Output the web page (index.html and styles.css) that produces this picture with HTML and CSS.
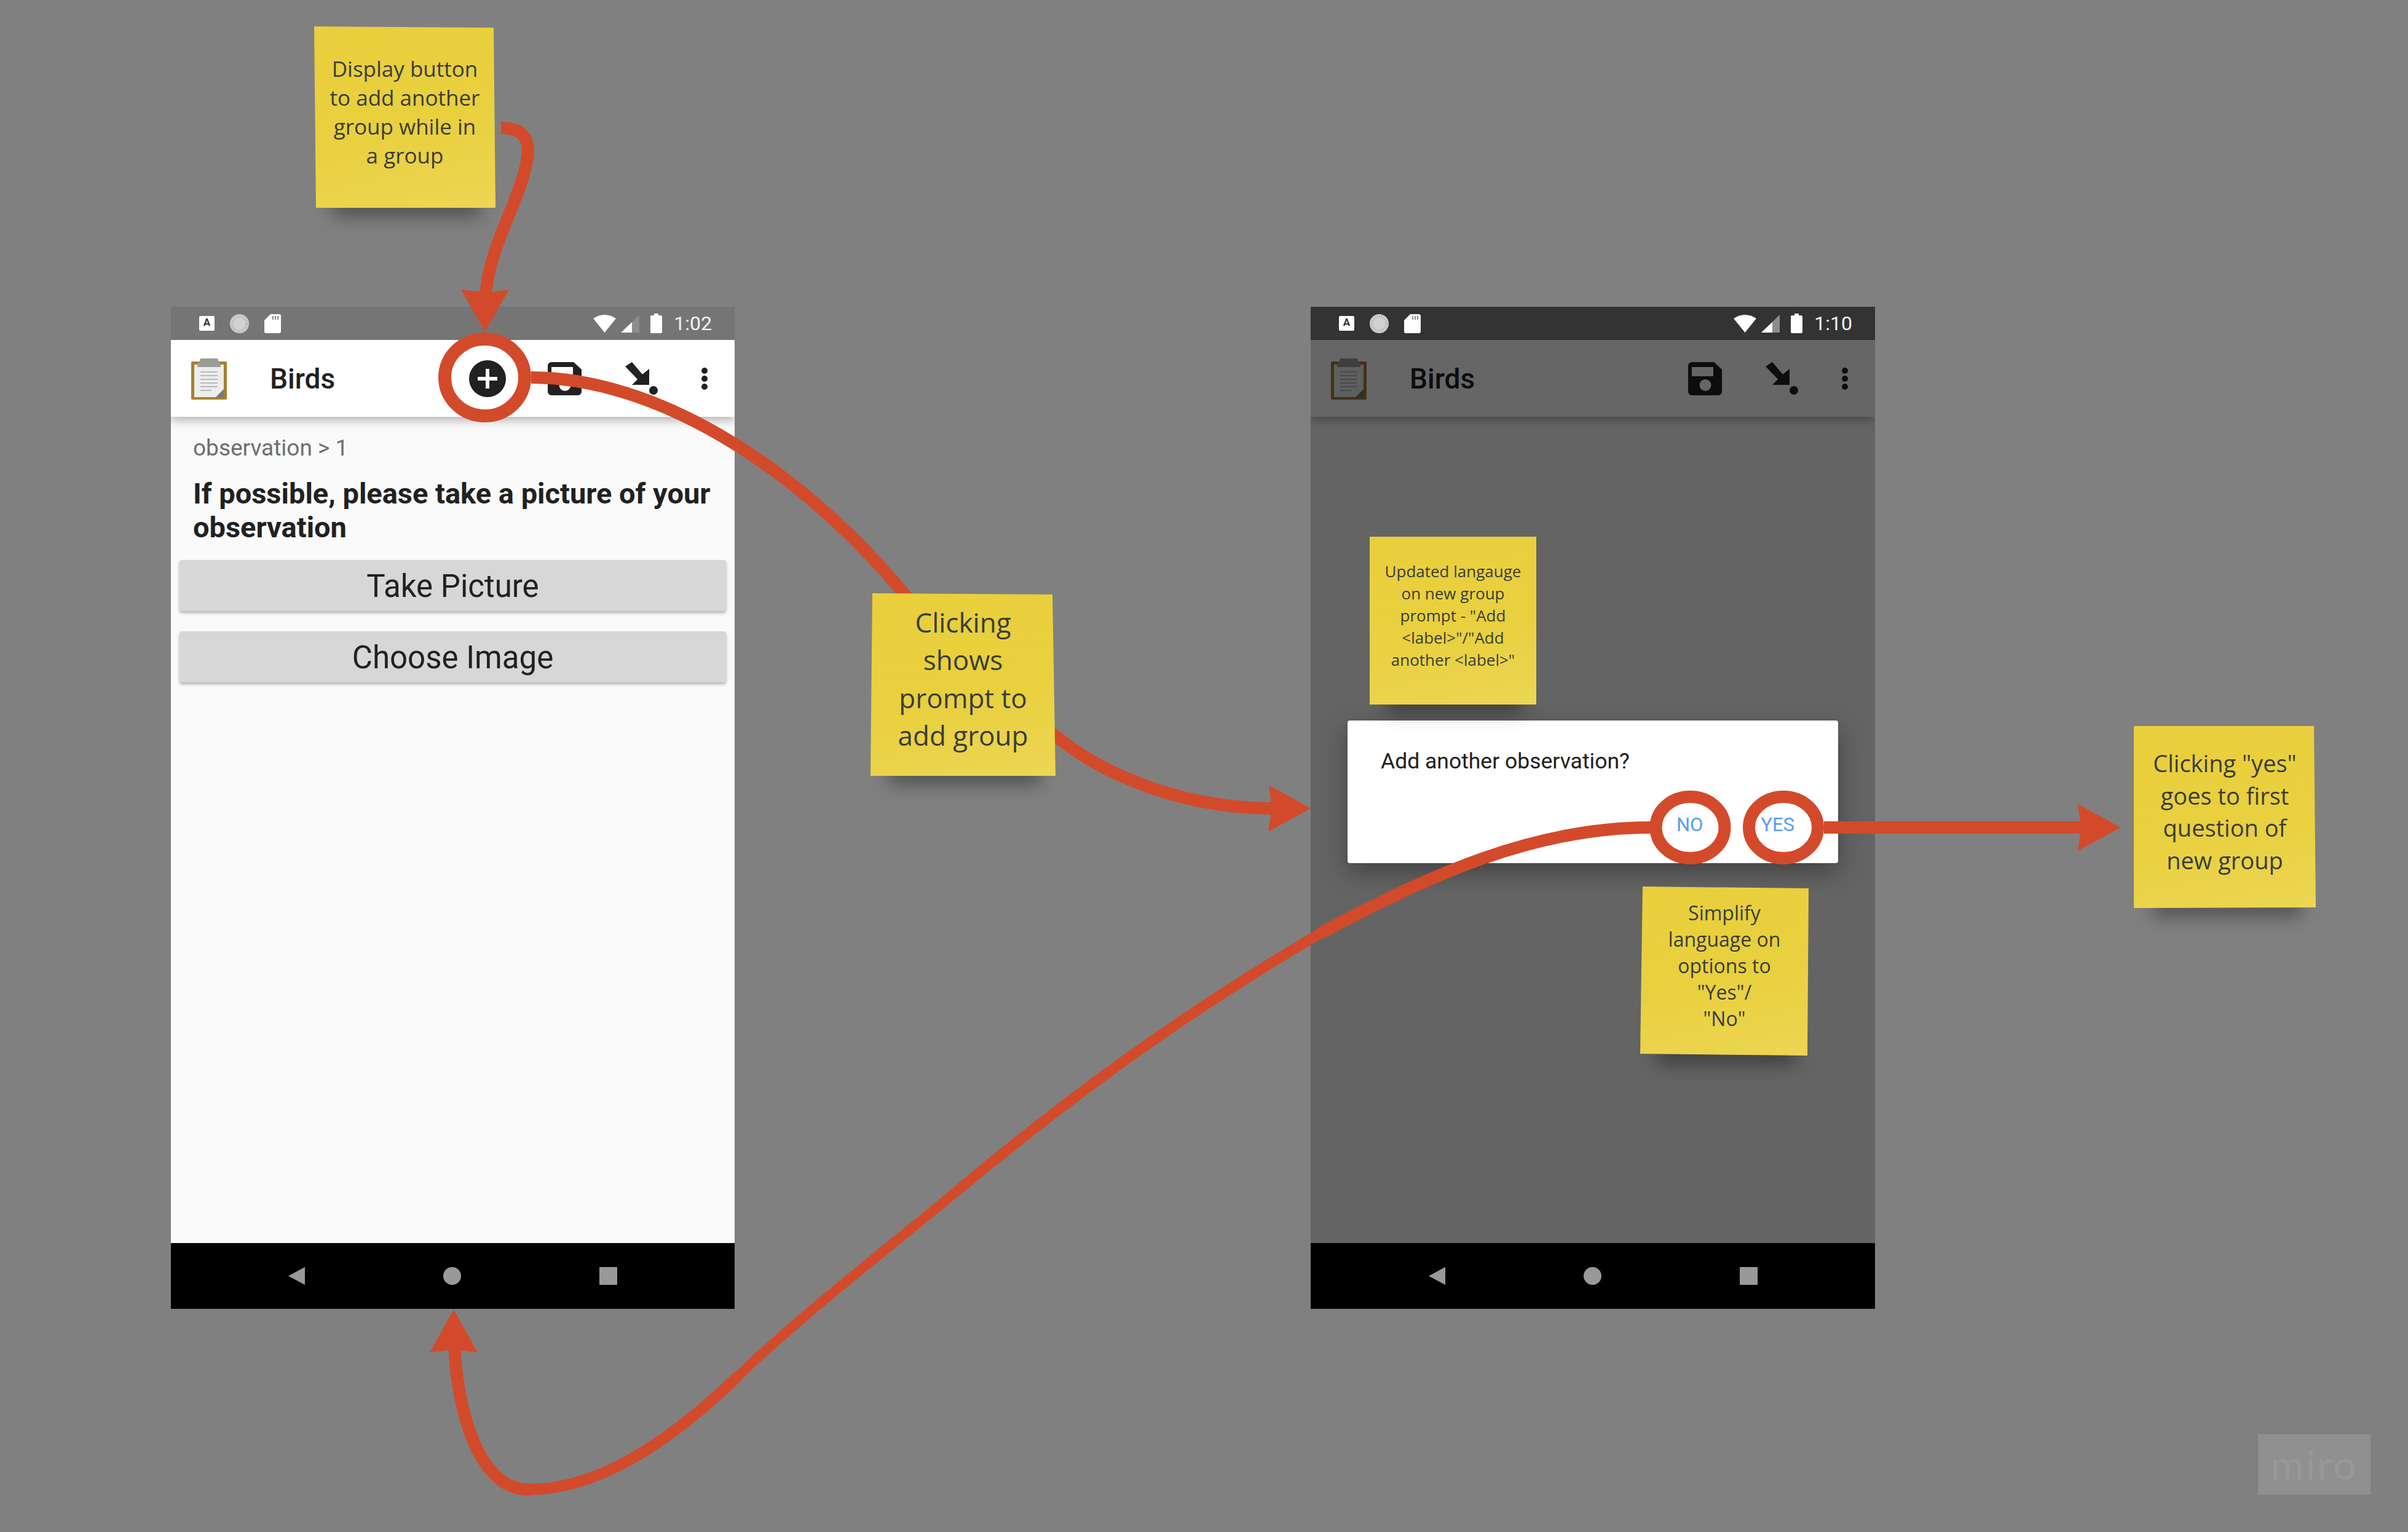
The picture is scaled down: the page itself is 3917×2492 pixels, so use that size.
FILE: index.html
```html
<!DOCTYPE html>
<html lang="en">
<head>
    <meta charset="UTF-8">
    <meta name="viewport" content="width=device-width, initial-scale=1.0">
    <title>Add group flow</title>
    <link rel="stylesheet" href="styles.css">
</head>
<body>
    <!-- shared icons -->
    <svg class="icon-defs" aria-hidden="true">
        <symbol id="i-sync" viewBox="0 0 31 31">
            <circle cx="15.5" cy="15.5" r="15.5" fill="#d2d2d2"/>
            <circle cx="15.5" cy="15.5" r="12" fill="none" stroke="#b4b4b4" stroke-width="5" stroke-dasharray="1.5 2"/>
        </symbol>
        <symbol id="i-sd" viewBox="0 0 27 31">
            <path d="M10 0h14a3 3 0 0 1 3 3v25a3 3 0 0 1-3 3H3a3 3 0 0 1-3-3V10z" fill="#fff"/>
            <path d="M13 3h2v6h-2zM17 3h2v6h-2zM21 3h2v6h-2z" fill="#888"/>
        </symbol>
        <symbol id="i-wifi" viewBox="0 0 37 30">
            <path d="M0 7Q18.500-5 37 7L18.500 30z" fill="#fff"/>
        </symbol>
        <symbol id="i-signal" viewBox="0 0 30 29">
            <path d="M30 0v29H0z" fill="#8c8c8c"/>
            <path d="M18 12v17H0z" fill="#fff"/>
        </symbol>
        <symbol id="i-battery" viewBox="0 0 19 32">
            <path d="M6 0h7v3h4a2 2 0 0 1 2 2v25a2 2 0 0 1-2 2H2a2 2 0 0 1-2-2V5a2 2 0 0 1 2-2h4z" fill="#fff"/>
        </symbol>
        <symbol id="i-clipboard" viewBox="0 0 58 68">
            <rect y="6" width="58" height="62" rx="2" fill="#a87f2f"/>
            <rect x="5" y="11" width="48" height="53" fill="#eceded"/>
            <path d="M14 4a3 3 0 0 1 3-3h24a3 3 0 0 1 3 3v4h4v7H10V8h4z" fill="#9b9d98"/>
            <path d="M15 23h28M15 29h28M15 35h28M15 41h28M15 47h28M15 53h18" stroke="#b9bab8" stroke-width="2"/>
            <path d="M40 64l13-13v13z" fill="#777"/>
        </symbol>
        <symbol id="i-add" viewBox="0 0 60 60">
            <circle cx="30" cy="30" r="30" fill="#212121"/>
            <path d="M27 14h6v13h13v6H33v13h-6V33H14v-6h13z" fill="#fff"/>
        </symbol>
        <symbol id="i-save" viewBox="0 0 55 54">
            <path d="M6 0h36l13 12v36a6 6 0 0 1-6 6H6a6 6 0 0 1-6-6V6a6 6 0 0 1 6-6zM6 8v15h35V8zM28 28a9.500 9.500 0 1 0 0 19 9.500 9.500 0 0 0 0-19z" fill="#212121" fill-rule="evenodd"/>
        </symbol>
        <symbol id="i-send" viewBox="0 0 53 53">
            <path d="M0 7 11 0l17 20 11-9v26H11l9-9z" fill="#212121"/>
            <ellipse cx="46" cy="46" rx="7" ry="7" fill="#212121"/>
        </symbol>
        <symbol id="i-more" viewBox="0 0 12 36">
            <circle cx="6" cy="5" r="5" fill="#212121"/>
            <circle cx="6" cy="18" r="5" fill="#212121"/>
            <circle cx="6" cy="31" r="5" fill="#212121"/>
        </symbol>
        <symbol id="i-back" viewBox="0 0 27 29">
            <path d="M27 0v29L0 14.500z" fill="#999"/>
        </symbol>
        <symbol id="i-home" viewBox="0 0 29 29">
            <circle cx="14.500" cy="14.500" r="14.500" fill="#999"/>
        </symbol>
        <symbol id="i-recent" viewBox="0 0 29 29">
            <rect width="29" height="29" rx="1" fill="#999"/>
        </symbol>
    </svg>

    <!-- phone 1: question screen -->
    <section class="phone phone-question">
        <div class="statusbar">
            <span class="st-keyboard">A</span>
            <svg class="st-sync"><use href="#i-sync"/></svg>
            <svg class="st-sd"><use href="#i-sd"/></svg>
            <div class="status-right">
                <svg class="st-wifi"><use href="#i-wifi"/></svg>
                <svg class="st-signal"><use href="#i-signal"/></svg>
                <svg class="st-battery"><use href="#i-battery"/></svg>
                <span class="clock">1:02</span>
            </div>
        </div>
        <div class="screen">
            <div class="toolbar">
                <svg class="tb-clipboard"><use href="#i-clipboard"/></svg>
                <span class="toolbar-title">Birds</span>
                <div class="toolbar-actions">
                    <svg class="tb-add"><use href="#i-add"/></svg>
                    <svg class="tb-save"><use href="#i-save"/></svg>
                    <svg class="tb-send"><use href="#i-send"/></svg>
                    <svg class="tb-more"><use href="#i-more"/></svg>
                </div>
            </div>
            <div class="content">
                <div class="breadcrumb">observation &gt; 1</div>
                <h2 class="question">If possible, please take a picture of your observation</h2>
                <button class="widget-btn">Take Picture</button>
                <button class="widget-btn">Choose Image</button>
            </div>
        </div>
        <div class="navbar">
            <svg class="nav-back"><use href="#i-back"/></svg>
            <svg class="nav-icon"><use href="#i-home"/></svg>
            <svg class="nav-icon"><use href="#i-recent"/></svg>
        </div>
    </section>

    <!-- phone 2: add group prompt -->
    <section class="phone phone-prompt">
        <div class="statusbar">
            <span class="st-keyboard">A</span>
            <svg class="st-sync"><use href="#i-sync"/></svg>
            <svg class="st-sd"><use href="#i-sd"/></svg>
            <div class="status-right">
                <svg class="st-wifi"><use href="#i-wifi"/></svg>
                <svg class="st-signal"><use href="#i-signal"/></svg>
                <svg class="st-battery"><use href="#i-battery"/></svg>
                <span class="clock">1:10</span>
            </div>
        </div>
        <div class="screen">
            <div class="toolbar">
                <svg class="tb-clipboard"><use href="#i-clipboard"/></svg>
                <span class="toolbar-title">Birds</span>
                <div class="toolbar-actions">
                    <svg class="tb-save"><use href="#i-save"/></svg>
                    <svg class="tb-send"><use href="#i-send"/></svg>
                    <svg class="tb-more"><use href="#i-more"/></svg>
                </div>
            </div>
            <div class="content"></div>
            <div class="scrim">
                <div class="dialog">
                    <div class="dialog-message">Add another observation?</div>
                    <div class="dialog-actions">
                        <span class="dialog-btn">NO</span>
                        <span class="dialog-btn">YES</span>
                    </div>
                </div>
            </div>
        </div>
        <div class="navbar">
            <svg class="nav-back"><use href="#i-back"/></svg>
            <svg class="nav-icon"><use href="#i-home"/></svg>
            <svg class="nav-icon"><use href="#i-recent"/></svg>
        </div>
    </section>

    <!-- arrows and rings drawn on top of the phones -->
    <svg class="arrows" viewBox="0 0 3917 2492">
        <g class="arrow-line">
            <path stroke-width="20" d="M815 208C850 208 862 225 858 255C850 320 795 400 790 480"/>
            <path stroke-width="20" d="M864 614C1060 614 1290 750 1470 965C1560 1075 1640 1140 1717 1197C1800 1265 1930 1315 2072 1315"/>
            <path stroke-width="20" d="M2967 1346H3390"/>
            <path class="seg" stroke-width="20" d="M2684 1346C2500 1346 2330 1420 2150 1517"/>
            <path class="seg" stroke-width="17" d="M2150 1517C1990 1610 1800 1735 1564 1931"/>
            <path class="seg" stroke-width="16" d="M1564 1931C1440 2035 1310 2133 1200 2239"/>
            <path class="seg" stroke-width="18" d="M1200 2239C1100 2335 980 2423 860 2423"/>
            <path class="seg" stroke-width="20" d="M860 2423C780 2423 745 2300 739 2190"/>
            <ellipse stroke-width="21" cx="788.500" cy="614" rx="65" ry="62.500"/>
            <ellipse stroke-width="20" cx="2749.500" cy="1346" rx="56" ry="50"/>
            <ellipse stroke-width="20" cx="2901" cy="1346" rx="56" ry="50"/>
        </g>
        <g class="arrow-head">
            <path d="M750 471L790 476L828 471L789 540z"/>
            <path d="M2064 1277L2069 1315L2063 1353L2132 1315z"/>
            <path d="M699 2200L738 2195L777 2200L738 2130z"/>
            <path d="M3380 1308L3385 1346L3380 1384L3450 1346z"/>
        </g>
    </svg>

    <!-- sticky notes -->
    <div class="note note-display">
        <div class="note-paper">Display button<br>to add another<br>group while in<br>a group</div>
    </div>
    <div class="note note-clicking">
        <div class="note-paper">Clicking<br>shows<br>prompt to<br>add group</div>
    </div>
    <div class="note note-updated">
        <div class="note-paper">Updated langauge<br>on new group<br>prompt - "Add<br>&lt;label&gt;"/"Add<br>another &lt;label&gt;"</div>
    </div>
    <div class="note note-simplify">
        <div class="note-paper">Simplify<br>language on<br>options to<br>"Yes"/<br>"No"</div>
    </div>
    <div class="note note-yes">
        <div class="note-paper">Clicking "yes"<br>goes to first<br>question of<br>new group</div>
    </div>

    <div class="watermark">miro</div>
</body>
</html>
```

FILE: styles.css
```css
/* Global styles */
body {
    position: relative;
    width: 3917px;
    height: 2492px;
    margin: 0;
    overflow: hidden;
    background-color: #808080;
    font-family: Roboto, sans-serif;
    color: #212121;
}
.icon-defs {
    position: absolute;
    width: 0;
    height: 0;
}

/* Phones */
.phone {
    position: absolute;
    top: 499px;
    z-index: 0;
    display: flex;
    flex-direction: column;
    height: 1630px;
}
.phone-question {
    left: 278px;
    width: 917px;
}
.phone-prompt {
    left: 2132px;
    width: 918px;
}
.statusbar {
    display: flex;
    align-items: center;
    height: 54px;
    padding: 0 37px 0 46px;
    box-sizing: border-box;
    background-color: #757575;
}
.phone-prompt .statusbar {
    background-color: #333;
}
.st-keyboard {
    width: 25px;
    height: 24px;
    margin-right: 25px;
    border-radius: 2px;
    background-color: #fff;
    font-size: 17px;
    font-weight: 700;
    line-height: 21px;
    color: #333;
    text-align: center;
}
.st-sync { width: 31px; height: 31px; margin-right: 25px; }
.st-sd { width: 27px; height: 31px; }
.status-right {
    display: flex;
    align-items: center;
    margin-left: auto;
}
.st-wifi { width: 37px; height: 30px; margin-right: 8px; }
.st-signal { width: 30px; height: 29px; margin-right: 18px; }
.st-battery { width: 19px; height: 32px; margin-right: 19px; }
.clock {
    font-size: 32px;
    color: #f2f2f2;
    line-height: 54px;
}

.screen {
    position: relative;
    display: flex;
    flex-direction: column;
    flex: 1;
    overflow: hidden;
}
.toolbar {
    position: relative;
    z-index: 1;
    display: flex;
    align-items: center;
    height: 125px;
    padding: 0 43px 0 33px;
    box-sizing: border-box;
    background-color: #fff;
    box-shadow: 0 6px 14px rgba(0, 0, 0, 0.28);
}
.tb-clipboard { width: 58px; height: 68px; }
.toolbar-title {
    margin-left: 70px;
    font-size: 46px;
    font-weight: 500;
}
.toolbar-actions {
    display: flex;
    align-items: center;
    gap: 70px;
    margin-left: auto;
}
.tb-add { width: 60px; height: 60px; }
.tb-save { width: 55px; height: 54px; margin-left: -2px; }
.tb-send { width: 53px; height: 53px; margin-left: 1px; }
.tb-more { width: 12px; height: 36px; }

.content {
    flex: 1;
    padding: 30px 14px 0;
    background-color: #fafafa;
}
.breadcrumb {
    margin-left: 22px;
    font-size: 37px;
    line-height: 42px;
    color: #6e6e6e;
}
.question {
    margin: 25px 20px 26px 22px;
    font-size: 47px;
    font-weight: 700;
    line-height: 55px;
}
.widget-btn {
    display: block;
    width: 100%;
    height: 83px;
    margin-bottom: 33px;
    padding: 0;
    border: none;
    border-radius: 4px;
    background-color: #d6d7d6;
    box-shadow: 0 3px 5px rgba(0, 0, 0, 0.3);
    font-family: Roboto, sans-serif;
    font-size: 51px;
    line-height: 86px;
    color: #212121;
}

.navbar {
    display: flex;
    align-items: center;
    justify-content: center;
    gap: 225px;
    height: 107px;
    background-color: #000;
    box-shadow: 0 -2px 0 #aaa;
}
.nav-back { width: 27px; height: 29px; }
.nav-icon { width: 29px; height: 29px; }

/* Dimmed overlay and dialog */
.scrim {
    position: absolute;
    inset: 0;
    z-index: 2;
    display: flex;
    align-items: center;
    justify-content: center;
    background-color: rgba(0, 0, 0, 0.6);
}
.dialog {
    width: 798px;
    height: 232px;
    padding: 44px 71px 0 54px;
    box-sizing: border-box;
    border-radius: 4px;
    background-color: #fff;
    box-shadow: 0 14px 40px rgba(0, 0, 0, 0.35);
}
.dialog-message {
    font-size: 35.500px;
    line-height: 44px;
}
.dialog-actions {
    display: flex;
    justify-content: flex-end;
    gap: 94px;
    margin-top: 62px;
}
.dialog-btn {
    font-size: 31px;
    line-height: 40px;
    color: #5a9cf5;
}

/* Arrows */
.arrows {
    position: absolute;
    top: 0;
    left: 0;
    z-index: 1;
    width: 3917px;
    height: 2492px;
}
.arrow-line path,
.arrow-line ellipse {
    fill: none;
    stroke: #d34a2b;
}
.arrow-line .seg {
    stroke-linecap: round;
}
.arrow-head path {
    fill: #d34a2b;
}

/* Sticky notes */
.note {
    position: absolute;
    z-index: 2;
}
.note::after {
    content: "";
    position: absolute;
    left: 10%;
    right: 8%;
    bottom: -14px;
    z-index: -1;
    height: 30px;
    background-color: rgba(0, 0, 0, 0.38);
    filter: blur(14px);
}
.note-paper {
    display: flex;
    align-items: center;
    justify-content: center;
    height: 100%;
    padding-bottom: 18px;
    box-sizing: border-box;
    background: linear-gradient(168deg, #e9cf3c 0%, #e9d03e 55%, #ecd654 100%);
    font-family: "Open Sans", sans-serif;
    color: #3a3d3a;
    text-align: center;
}
.note-display {
    left: 511px;
    top: 43px;
    width: 295px;
    height: 295px;
}
.note-display .note-paper {
    clip-path: polygon(0 0, 292px 2px, 295px 295px, 3px 295px);
    font-size: 35px;
    line-height: 47px;
}
.note-clicking {
    left: 1416px;
    top: 965px;
    width: 301px;
    height: 297px;
}
.note-clicking .note-paper {
    clip-path: polygon(3px 0, 296px 2px, 301px 297px, 0 297px);
    font-size: 44px;
    line-height: 61.500px;
}
.note-updated {
    left: 2228px;
    top: 873px;
    width: 271px;
    height: 273px;
}
.note-updated .note-paper {
    font-size: 26px;
    line-height: 36px;
}
.note-simplify {
    left: 2668px;
    top: 1442px;
    width: 274px;
    height: 275px;
}
.note-simplify .note-paper {
    clip-path: polygon(4px 0, 274px 3px, 272px 275px, 0 272px);
    font-size: 32px;
    line-height: 43px;
}
.note-yes {
    left: 3471px;
    top: 1181px;
    width: 296px;
    height: 296px;
}
.note-yes .note-paper {
    clip-path: polygon(0 0, 293px 0, 296px 295px, 0 296px);
    font-size: 38px;
    line-height: 52.500px;
}

.watermark {
    position: absolute;
    left: 3673px;
    top: 2333px;
    width: 183px;
    height: 98px;
    background-color: #909090;
    font-family: Lato, sans-serif;
    font-size: 66px;
    line-height: 98px;
    letter-spacing: 3px;
    color: #989799;
    text-align: center;
}
```
